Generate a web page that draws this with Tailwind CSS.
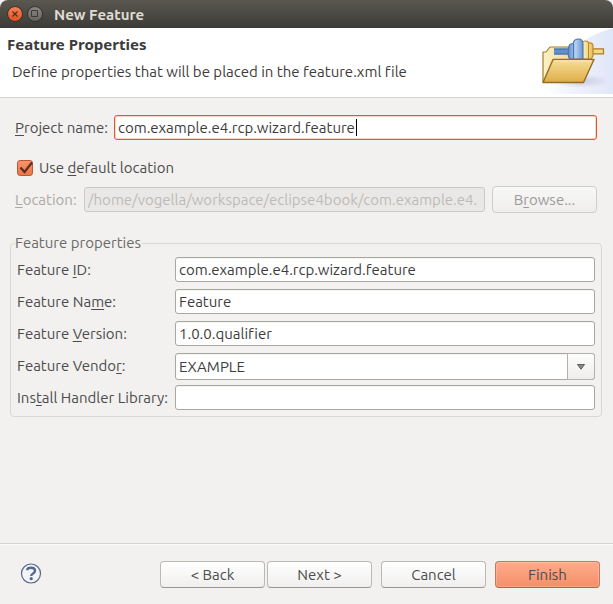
<!DOCTYPE html>
<html lang="en">
<head>
<meta charset="utf-8">
<meta name="viewport" content="width=device-width, initial-scale=1">
<title>New Feature</title>
<script src="https://cdn.jsdelivr.net/npm/@tailwindcss/browser@4"></script>
</head>
<body class="bg-[#f2f1f0] font-['Ubuntu','Noto_Sans',sans-serif] text-[15px] text-[#4c4c4c] [font-variant-ligatures:none]">
<div class="flex min-h-screen flex-col">
  <header class="flex h-7 items-center gap-1 rounded-t-lg bg-linear-to-b from-[#5a5850] to-[#3c3b37] px-[7px]">
    <button aria-label="Close" class="size-4">
      <svg viewBox="0 0 16 16" class="size-4"><defs><linearGradient id="c" x2="0" y2="1"><stop stop-color="#f8825a"/><stop offset="1" stop-color="#e2501f"/></linearGradient></defs><circle cx="8" cy="8" r="7.5" fill="url(#c)" stroke="#33322e"/><path d="M5.500 5.500l5 5m0-5l-5 5" stroke="#4a2c20" stroke-width="1.100"/></svg>
    </button>
    <button aria-label="Maximize" class="size-4">
      <svg viewBox="0 0 16 16" class="size-4"><defs><linearGradient id="m" x2="0" y2="1"><stop stop-color="#8b8981"/><stop offset="1" stop-color="#64625b"/></linearGradient></defs><circle cx="8" cy="8" r="7.5" fill="url(#m)" stroke="#33322e"/><path d="M4.500 4.500h6v6h-6z" fill="none" stroke="#3c3b37"/></svg>
    </button>
    <h1 class="pt-[2px] pl-[7px] font-bold text-[#dfdbd2]">New Feature</h1>
  </header>

  <section class="flex h-[70px] items-start justify-between border-b border-[#d5d3d1] bg-white text-[#3c3c3c]">
    <div>
      <h2 class="pt-[6px] pl-[7px] font-['Noto_Sans',sans-serif] text-[15px] leading-5 font-bold">Feature Properties</h2>
      <p class="pt-2 pl-3 leading-5">Define properties that will be placed in the feature.xml file</p>
    </div>
    <svg viewBox="-1 0 75 66" class="h-[66px] w-[75px] shrink-0" aria-hidden="true">
      <defs>
        <linearGradient id="bg"><stop stop-color="#e2e8f7" stop-opacity="0"/><stop offset=".6" stop-color="#ebeffa"/><stop offset="1" stop-color="#dfe6f7"/></linearGradient>
        <linearGradient id="fr" x2="0" y2="1"><stop stop-color="#f6df98"/><stop offset="1" stop-color="#dfac48"/></linearGradient>
        <linearGradient id="bk" x2="1"><stop stop-color="#fcf1c6"/><stop offset="1" stop-color="#ecd080"/></linearGradient>
        <linearGradient id="bl"><stop stop-color="#5f8dce"/><stop offset=".5" stop-color="#b5cff0"/><stop offset="1" stop-color="#6a94d2"/></linearGradient>
        <linearGradient id="yl"><stop stop-color="#fff3b8"/><stop offset="1" stop-color="#e8c05c"/></linearGradient>
        <radialGradient id="sh"><stop stop-color="#9a9cc0" stop-opacity=".45"/><stop offset="1" stop-color="#9a9cc0" stop-opacity="0"/></radialGradient>
      </defs>
      <path d="M75 0Q24 12 7 66H75z" fill="url(#bg)"/>
      <ellipse cx="42" cy="53" rx="28" ry="7" fill="url(#sh)"/>
      <path d="M4 54V24h3l4-5h18l3 3v4h13v8L33 54z" fill="url(#bk)" stroke="#a67d2c" stroke-width="1.200" stroke-linejoin="round"/>
      <path d="M15 20.500h15v6H15z" fill="#628fcd"/><path d="M15 21h15M15 26h15" stroke="#3e69aa"/>
      <path d="M53.500 20.800h11v5h-11z" fill="#f3d885" stroke="#b07b22" stroke-width="1.200"/>
      <path d="M43 31V14.500q1-1.500 3.500-1.500t3.500 2q4-.5 4 3V28l-2 3z" fill="url(#yl)" stroke="#bd872a" stroke-width="1.200"/>
      <path d="M49.500 15v16" stroke="#bd872a"/>
      <path d="M30 30q-1.500-4 0-12 1-2.500 4-2.500 1-4.500 5.500-4.500t4.500 5V31H31z" fill="url(#bl)" stroke="#4973b3" stroke-width="1.100"/>
      <path d="M34.500 15.500v15.500" stroke="#4973b3"/>
      <path d="M14 31.500h41L44.500 54.500H4z" fill="url(#fr)" stroke="#946d20" stroke-width="1.400" stroke-linejoin="round"/>
      <path d="M15 32.800h37.500" stroke="#fff0bb"/>
    </svg>
  </section>

  <form class="flex flex-1 flex-col">
    <div class="flex flex-1 flex-col pt-[17px] pr-[11px] pl-[10px]">
      <div class="flex items-start gap-[6px] pr-[5px] pl-[5px]">
        <label for="name" class="w-[93px] leading-[25px] whitespace-nowrap"><span class="underline underline-offset-2">P</span>roject name:</label>
        <div class="relative min-w-0 flex-1">
          <input id="name" value="com.example.e4.rcp.wizard.feature" class="block h-[25px] w-full rounded-[3px] border border-[#dd5a2c] bg-white px-[3px] text-[#3c3c3c] caret-transparent inset-ring inset-ring-[#f7d5c7] outline-none">
          <span class="pointer-events-none absolute inset-y-1 left-[242px] w-px bg-black"></span>
        </div>
      </div>
      <div class="mt-[18px] flex items-center gap-[6px] pl-[7px]">
        <span class="relative size-4">
          <input id="default" type="checkbox" checked class="block size-4 appearance-none rounded-[3px] border border-[#b55b3a] bg-linear-to-b from-[#f9936b] to-[#f0744a]">
          <svg viewBox="0 0 18 16" class="pointer-events-none absolute top-0 left-0 h-4 w-[18px]"><path d="M3.500 7.500l4 4.500L15 2.500" fill="none" stroke="#5b2f20" stroke-width="2.200"/></svg>
        </span>
        <label for="default" class="leading-5">Use <span class="underline underline-offset-2">d</span>efault location</label>
      </div>
      <div class="mt-2 flex items-start pr-[5px] pl-[5px]">
        <label for="location" class="w-[69px] leading-[27px] text-[#aca9a6]"><span class="underline underline-offset-2">L</span>ocation:</label>
        <input id="location" disabled value="/home/vogella/workspace/eclipse4book/com.example.e4." class="mt-px h-[25px] min-w-0 flex-1 rounded-[3px] border border-[#cbc9c7] bg-[#eae8e7] px-[3px] text-[#bdbab8]">
        <button type="button" disabled class="ml-[7px] h-[27px] w-[105px] rounded border border-[#d0cecc] bg-linear-to-b from-[#f8f8f7] to-[#efeeed] pt-px text-[#9c9a98]">B<span class="underline underline-offset-2">r</span>owse...</button>
      </div>

      <fieldset class="relative mt-[30px] grid auto-rows-[27px] grid-cols-[152px_1fr] items-start gap-x-[6px] gap-y-[5px] rounded border border-[#d9d7d5] px-[6px] pt-[13px] pb-1 leading-[25px]">
        <legend class="absolute -top-[11px] left-1 bg-[#f2f1f0] pr-px leading-5 text-[#6c6a68]">Feature properties</legend>
        <label for="fid">Feature <span class="underline underline-offset-2">I</span>D:</label>
        <input id="fid" value="com.example.e4.rcp.wizard.feature" class="h-[25px] min-w-0 rounded-[3px] border border-[#aaa6a1] bg-white px-[3px] text-[#3c3c3c] inset-shadow-2xs">
        <label for="fname">Feature Na<span class="underline underline-offset-2">m</span>e:</label>
        <input id="fname" value="Feature" class="h-[25px] min-w-0 rounded-[3px] border border-[#aaa6a1] bg-white px-[3px] text-[#3c3c3c] inset-shadow-2xs">
        <label for="fver">Feature <span class="underline underline-offset-2">V</span>ersion:</label>
        <input id="fver" value="1.0.0.qualifier" class="h-[25px] min-w-0 rounded-[3px] border border-[#aaa6a1] bg-white px-[3px] text-[#3c3c3c] inset-shadow-2xs">
        <label for="vendor">Feature Vendo<span class="underline underline-offset-2">r</span>:</label>
        <div class="relative">
          <select id="vendor" class="block h-[27px] w-full appearance-none rounded-[3px] border border-[#aaa6a1] bg-white px-[3px] leading-[25px] text-[#3c3c3c] inset-shadow-2xs"><option>EXAMPLE</option></select>
          <span class="pointer-events-none absolute inset-y-0 right-0 flex w-7 items-center justify-center rounded-r-[3px] border border-[#b5b1ad] bg-linear-to-b from-[#fefefe] to-[#eeedeb]"><svg viewBox="0 0 8 6" class="h-[6px] w-2"><path d="M.5.5h7L4 5.200z" fill="#8a8a8a" stroke="#5c5c5c"/></svg></span>
        </div>
        <label for="lib" class="whitespace-nowrap">Ins<span class="underline underline-offset-2">t</span>all Handler Library:</label>
        <input id="lib" class="h-[25px] min-w-0 rounded-[3px] border border-[#aaa6a1] bg-white px-[3px] text-[#3c3c3c] inset-shadow-2xs">
      </fieldset>
    </div>

    <footer class="flex h-[61px] items-center justify-between border-t border-[#d5d3d1] pr-[13px] pl-5 shadow-[inset_0_1px_#fbfbfa]">
      <button type="button" aria-label="Help" class="size-[22px]">
        <svg viewBox="0 0 22 22" class="size-[22px]"><circle cx="11" cy="10.500" r="9.500" fill="#f4f5f8" stroke="#566788" stroke-width="1.200"/><path d="M7.200 7.300Q7.200 4.700 11 4.700q4 0 4 3.100q0 1.800-2.200 2.900q-1.600.8-1.600 2.200" fill="none" stroke="#526792" stroke-width="2.400"/><circle cx="11.200" cy="15.700" r="1.600" fill="#526792"/></svg>
      </button>
      <div class="flex gap-[9px]">
        <div class="flex gap-[2px]">
          <button type="button" class="h-[27px] w-[105px] rounded border border-[#bbb8b5] border-b-[#98948f] bg-linear-to-b from-white to-[#f0efee] pt-[2px]">&lt; Back</button>
          <button type="button" class="h-[27px] w-[105px] rounded border border-[#bbb8b5] border-b-[#98948f] bg-linear-to-b from-white to-[#f0efee] pt-[2px]">Next &gt;</button>
        </div>
        <button type="button" class="h-[27px] w-[105px] rounded border border-[#bbb8b5] border-b-[#98948f] bg-linear-to-b from-white to-[#f0efee] pt-[2px]">Cancel</button>
        <button type="submit" class="h-[27px] w-[105px] rounded border border-[#c07a5e] border-b-[#a5674d] bg-linear-to-b from-[#fdac8b] to-[#f58e68] pt-[2px] inset-ring inset-ring-white/20">Finish</button>
      </div>
    </footer>
  </form>
</div>
</body>
</html>
